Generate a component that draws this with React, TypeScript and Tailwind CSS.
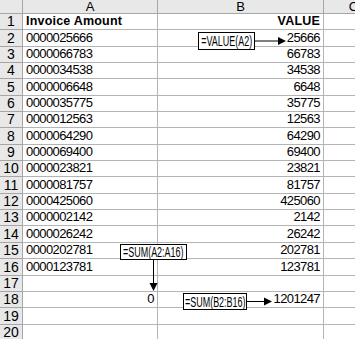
import React from "react";

const rows: [string, string][] = [
  ["0000025666", "25666"],
  ["0000066783", "66783"],
  ["0000034538", "34538"],
  ["0000006648", "6648"],
  ["0000035775", "35775"],
  ["0000012563", "12563"],
  ["0000064290", "64290"],
  ["0000069400", "69400"],
  ["0000023821", "23821"],
  ["0000081757", "81757"],
  ["0000425060", "425060"],
  ["0000002142", "2142"],
  ["0000026242", "26242"],
  ["0000202781", "202781"],
  ["0000123781", "123781"],
];

const font = { fontFamily: "'Liberation Sans', Arial, sans-serif" };

const Cell = ({
  children,
  right,
  bold,
}: {
  children?: React.ReactNode;
  right?: boolean;
  bold?: boolean;
}) => (
  <div
    className={`flex items-end h-full border-r border-b border-[#b4b4b4] px-[3px] pb-[1px] leading-[14px] text-black overflow-hidden whitespace-nowrap ${right ? "justify-end" : "justify-start"} ${bold ? "font-bold tracking-[0.2px] text-[12.5px]" : "text-[13px] tracking-[-0.6px]"}`}
  >
    {children}
  </div>
);

const RowHead = ({ n }: { n: number }) => (
  <div className="flex items-end justify-center h-full bg-[#e8e8e8] border-r border-b border-[#a6a6a6] pb-[1px] text-[14px] leading-[14px] text-black">
    {n}
  </div>
);

// formula label drawn over the sheet
const Callout = ({ text, className }: { text: string; className: string }) => (
  <div className={`absolute flex items-center justify-center bg-white border border-black text-black ${className}`}>
    <span className="inline-block scale-x-[0.64] whitespace-nowrap text-[14px] leading-none -mx-[20px]">
      {text}
    </span>
  </div>
);

export default function App() {
  const allRows: [string, string, boolean?][] = [
    ["Invoice Amount", "VALUE", true],
    ...rows.map(([a, b]) => [a, b] as [string, string]),
    ["", ""],
    ["0", "1201247"],
    ["", ""],
    ["", ""],
  ];

  return (
    <div className="relative w-[355px] h-[339px] overflow-hidden bg-white" style={font}>
      <div className="grid grid-cols-[23px_135px_166px_60px] grid-rows-[14px_repeat(20,16.35px)]">
        <div className="bg-[#e8e8e8] border-r border-b border-[#a6a6a6]" />
        {["A", "B", "C"].map((c) => (
          <div
            key={c}
            className="flex items-center justify-center bg-[#e8e8e8] border-r border-b border-[#a6a6a6] text-[13px] leading-none text-black"
          >
            {c}
          </div>
        ))}
        {allRows.map(([a, b, bold], i) => (
          <React.Fragment key={i}>
            <RowHead n={i + 1} />
            <Cell bold={bold} right={i === 17}>
              {a}
            </Cell>
            <Cell bold={bold} right>
              {b}
            </Cell>
            <Cell />
          </React.Fragment>
        ))}
      </div>

      <svg className="absolute inset-0 pointer-events-none" width="355" height="339">
        <line x1="254" y1="41" x2="280" y2="41" stroke="black" strokeWidth="1" />
        <polygon points="278,37 286,41 278,45" fill="black" />
        <line x1="153.5" y1="260" x2="153.5" y2="284" stroke="black" strokeWidth="1" />
        <polygon points="149.5,283 153.5,291 157.5,283" fill="black" />
        <line x1="247" y1="301.5" x2="266" y2="301.5" stroke="black" strokeWidth="1" />
        <polygon points="264,297.5 272,301.5 264,305.5" fill="black" />
      </svg>

      <Callout text="=VALUE(A2)" className="left-[198px] top-[32px] w-[57px] h-[18px]" />
      <Callout text="=SUM(A2:A16)" className="left-[120px] top-[244px] w-[67px] h-[16px]" />
      <Callout text="=SUM(B2:B16)" className="left-[183px] top-[293px] w-[64px] h-[17px]" />
    </div>
  );
}
